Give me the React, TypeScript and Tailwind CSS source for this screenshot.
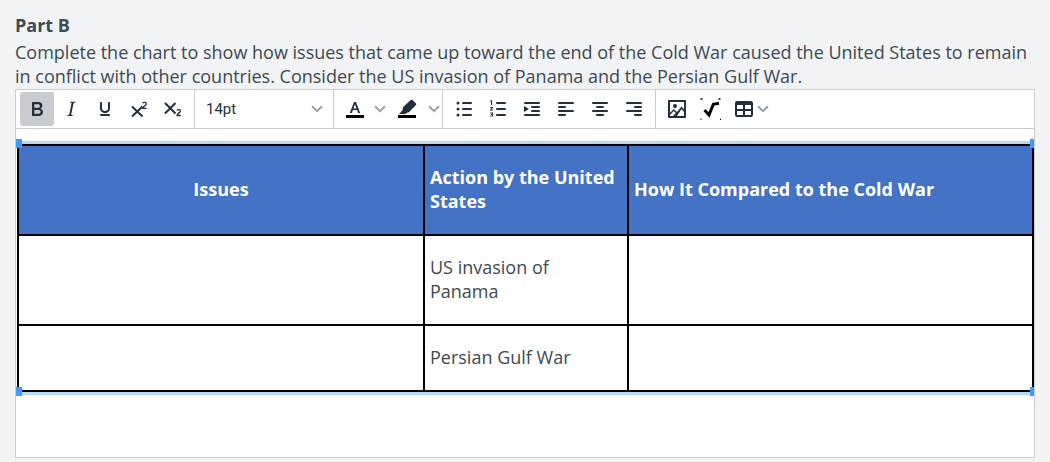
import {ReactNode} from 'react'

function Chevron() {
  return <svg width="12" height="8" viewBox="0 0 12 8" fill="none" stroke="#9aa0a6" strokeWidth="2" className="shrink-0">
    <path d="M1 1.200 6 6.200l5-5"/>
  </svg>
}

function Icon({children}: { children: ReactNode }) {
  return <svg width="24" height="24" viewBox="0 0 24 24" fill="#222f3e" className="shrink-0">{children}</svg>
}

function Cell({children}: { children: ReactNode }) {
  return <div className="flex w-[34px] shrink-0 justify-center">{children}</div>
}

function ListIcon({kind}: { kind: 'bullet' | 'number' }) {
  return <Icon>
    {kind === 'bullet' ? <>
      <circle cx="6" cy="6" r="1.500"/>
      <circle cx="6" cy="12" r="1.500"/>
      <circle cx="6" cy="18" r="1.500"/>
    </> : <>
      <path d="M5 3.300h1.100V8H5V4.400H4.100v-.7zM4 10h3v.9L5.300 12.800H7v.8H4v-.8l1.800-2H4zM4 15.400h3v4.200H4v-.8h2v-.9H4.800v-.8H6v-.9H4z"/>
    </>}
    <rect x="10" y="5" width="10" height="2" rx="1"/>
    <rect x="10" y="11" width="10" height="2" rx="1"/>
    <rect x="10" y="17" width="10" height="2" rx="1"/>
  </Icon>
}

function AlignIcon({lines}: { lines: [number, number][] }) {
  return <Icon>
    {lines.map(([x, w], i) => <rect key={i} x={x} y={5 + i * 4} width={w} height="2" rx="1"/>)}
  </Icon>
}

function Toolbar() {
  return <div className="flex h-[39px] items-stretch border-b border-[#ccc]">
    <div className="flex w-[179px] items-center border-r border-[#ccc] pl-1">
      <div className="flex h-[34px] w-[34px] items-center justify-center rounded-[3px] bg-[#c8cbcf]">
        <Icon><path d="M7.800 19c-.3 0-.5 0-.6-.2l-.2-.5V5.700c0-.2 0-.4.2-.5l.6-.2h5c1.500 0 2.700.3 3.500 1 .7.600 1.100 1.400 1.100 2.500a3 3 0 0 1-.6 1.900c-.4.600-1 1-1.600 1.200.4.100.9.300 1.300.600s.8.700 1 1.100c.3.500.4 1 .4 1.600 0 1.300-.4 2.300-1.300 3-.8.700-2.100 1-3.800 1H7.800zm5-8.300c.6 0 1.200-.1 1.600-.5.400-.3.600-.7.600-1.300 0-1.100-.8-1.700-2.300-1.700H9.300v3.500h3.500zm.5 6c.7 0 1.300-.1 1.700-.4.400-.4.600-.9.600-1.500s-.2-1-.7-1.400c-.4-.3-1-.4-2-.4H9.400v3.800h4z"/></Icon>
      </div>
      <Cell><Icon><path d="M16.700 4.700l-.1.900h-.3c-.6 0-1 0-1.400.3-.3.300-.4.600-.5 1.100l-2.100 9.800v.6c0 .5.400.8 1.400.8h.2l-.2.800H8l.2-.8h.2c1.100 0 1.800-.5 2-1.500l2-9.800.1-.5c0-.6-.4-.8-1.400-.8h-.3l.2-.9h5.800z"/></Icon></Cell>
      <Cell><Icon><path d="M16 5c.6 0 1 .4 1 1v5.500a4 4 0 0 1-.4 1.800l-1 1.400a5.300 5.300 0 0 1-5.500 1 5 5 0 0 1-1.600-1c-.5-.4-.8-.9-1.100-1.400a4 4 0 0 1-.4-1.800V6c0-.6.400-1 1-1s1 .4 1 1v5.500c0 .3 0 .6.200 1l.6.700a3.300 3.300 0 0 0 2.200.8 3.400 3.400 0 0 0 2.200-.8c.3-.2.500-.5.600-.8l.2-.9V6c0-.6.400-1 1-1zM8 17h8c.6 0 1 .4 1 1s-.4 1-1 1H8a1 1 0 0 1 0-2z"/></Icon></Cell>
      <Cell><Icon>
        <path d="M5 9.500 15.500 19.500M15.500 9.500 5 19.500" stroke="#222f3e" strokeWidth="2" fill="none"/>
        <path d="M15.800 6.300c.6-1.200 3.500-1.200 3.500.6 0 1.400-3.300 2.300-3.500 4.400h3.800" stroke="#222f3e" strokeWidth="1.300" fill="none"/>
      </Icon></Cell>
      <Cell><Icon>
        <path d="M4 6 14.500 16.500M14.500 6 4 16.500" stroke="#222f3e" strokeWidth="2" fill="none"/>
        <path d="M16 13.500c.6-1.200 3.500-1.200 3.500.6 0 1.400-3.300 2.300-3.500 4.400h3.800" stroke="#222f3e" strokeWidth="1.300" fill="none"/>
      </Icon></Cell>
    </div>

    <div className="flex w-[139px] items-center justify-between border-r border-[#ccc] pr-[10px] pl-[11px] font-['Roboto',sans-serif] text-[15px] text-[#222f3e]">
      <span>14pt</span>
      <Chevron/>
    </div>

    <div className="flex w-[109px] items-center border-r border-[#ccc] pl-[9px]">
      <Icon>
        <path fillRule="evenodd" d="M11 5h2l4.200 11h-2.100l-1-2.900H9.900l-1 2.900H6.800zm1 2.300-1.500 4.200h3z"/>
        <rect x="3" y="18" width="18" height="3" fill="#000"/>
      </Icon>
      <div className="ml-[7px]"><Chevron/></div>
      <div className="ml-[9px]">
        <Icon>
          <path d="M17.800 3.300 21 6.500c.4.400.4 1 0 1.400l-6.800 7c-.4.400-1.100.500-1.700.5l-1.500 1-1.200.9-1.200-.2L4 17l3.500-3.700.3-2c0-.6.200-1.200.6-1.600l7-6.400c.7-.6 1.700-.6 2.400 0z"/>
          <rect x="3" y="18" width="18" height="3" fill="#000"/>
        </Icon>
      </div>
      <div className="ml-[9px]"><Chevron/></div>
    </div>

    <div className="flex w-[213px] items-center gap-[10px] border-r border-[#ccc] pl-[9px]">
      <ListIcon kind="bullet"/>
      <ListIcon kind="number"/>
      <Icon>
        <rect x="4" y="5" width="16" height="2" rx="1"/>
        <rect x="11" y="9" width="9" height="2" rx="1"/>
        <rect x="11" y="13" width="9" height="2" rx="1"/>
        <rect x="4" y="17" width="16" height="2" rx="1"/>
        <path d="M4 9l5 3-5 3z"/>
      </Icon>
      <AlignIcon lines={[[4, 16], [4, 8], [4, 16], [4, 8]]}/>
      <AlignIcon lines={[[4, 16], [8, 8], [4, 16], [8, 8]]}/>
      <AlignIcon lines={[[4, 16], [12, 8], [4, 16], [12, 8]]}/>
    </div>

    <div className="flex items-center pl-[9px]">
      <Icon>
        <path d="M5 15.700l3.300-3.200c.3-.3.700-.3 1 0L12 15l4.100-5c.3-.4.800-.4 1 0l2 2.500V5H5v10.700zM5 18V19h3l2.800-2.900-2-2L5 17.900zm14-3l-2.500-3.100L12 19h7v-4zM4 3h16c.6 0 1 .4 1 1v16c0 .6-.4 1-1 1H4a1 1 0 0 1-1-1V4c0-.6.400-1 1-1zm6 8a2 2 0 1 1 0-4 2 2 0 0 1 0 4z"/>
      </Icon>
      <svg width="24" height="24" viewBox="0 0 24 24" fill="none" className="ml-[10px] shrink-0">
        <path d="M5.500 13l4.500 5 4.300-10.700 5.700-1" stroke="#000" strokeWidth="3"/>
        <path d="M1.500 2h2M19.500 2h2M1.500 22.300h1M21 22.300h1" stroke="#000" strokeWidth="1.300"/>
      </svg>
      <svg width="24" height="24" viewBox="0 0 24 24" fill="#222f3e" className="ml-[9px] shrink-0">
        <path d="M19 4a2 2 0 0 1 2 2v12a2 2 0 0 1-2 2H5a2 2 0 0 1-2-2V6c0-1.100.9-2 2-2h14zm0 10h-6v4h6v-4zm-8 0H5v4h6v-4zm8-6h-6v4h6V8zm-8 0H5v4h6V8z"/>
      </svg>
      <div className="ml-[1px]"><Chevron/></div>
    </div>
  </div>
}

export default function App() {
  return <div className="h-[462px] w-[1050px] overflow-hidden bg-[#f1f3f5] pl-[15px] font-['Open_Sans',sans-serif] text-[#3d4a52]">
    <h2 className="pt-[13px] text-[18px] leading-[24px] font-bold">Part B</h2>
    <p className="mt-[3px] w-[1020px] text-[18px] leading-[24px]">
      Complete the chart to show how issues that came up toward the end of the Cold War caused the United States to remain in conflict with other countries. Consider the US invasion of Panama and the Persian Gulf War.
    </p>
    <div className="mt-[1px] h-[369px] w-[1020px] border border-[#ccc] bg-white">
      <Toolbar/>
      <div className="pt-[12px]">
        <div className="relative">
          <div className="border-y-[3px] border-[#b5d8f3] pl-[1px]">
            <table className="w-[1017px] table-fixed border-collapse text-[18px] leading-[24px]">
              <colgroup>
                <col className="w-[406px]"/>
                <col className="w-[204px]"/>
                <col/>
              </colgroup>
              <tbody>
                <tr className="h-[90px] bg-[#4472c4] font-bold text-white">
                  <td className="border-2 border-black px-[5px] pb-[2px] text-center">Issues</td>
                  <td className="border-2 border-black pr-[5px] pb-[2px] pl-[5px]">Action by the United States</td>
                  <td className="border-2 border-black px-[5px] pb-[2px]">How It Compared to the Cold War</td>
                </tr>
                <tr className="h-[90px]">
                  <td className="border-2 border-black px-[5px]"></td>
                  <td className="border-2 border-black pr-[12px] pb-[2px] pl-[5px]">US invasion of Panama</td>
                  <td className="border-2 border-black px-[5px]"></td>
                </tr>
                <tr className="h-[66px]">
                  <td className="border-2 border-black px-[5px]"></td>
                  <td className="border-2 border-black px-[5px] pb-[2px]">Persian Gulf War</td>
                  <td className="border-2 border-black px-[5px]"></td>
                </tr>
              </tbody>
            </table>
          </div>
          <span className="absolute -top-[2px] left-0 h-[9px] w-[6px] bg-[#4099ff]"/>
          <span className="absolute -top-[2px] right-0 h-[9px] w-[4px] bg-[#4099ff]"/>
          <span className="absolute -bottom-[1px] left-0 h-[9px] w-[6px] bg-[#4099ff]"/>
          <span className="absolute -bottom-[1px] right-0 h-[9px] w-[4px] bg-[#4099ff]"/>
        </div>
      </div>
    </div>
  </div>
}
